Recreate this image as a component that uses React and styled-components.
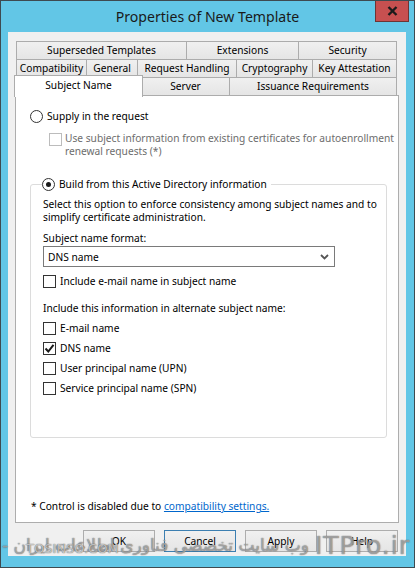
import React from "react";
import styled, { createGlobalStyle } from "styled-components";

const Global = createGlobalStyle`
  html, body { margin: 0; padding: 0; background: #5fc4e4; }
  * { box-sizing: border-box; }
  body { font-family: "Noto Sans", "Open Sans", sans-serif; }
`;

const FS = "10.2px";

const Window = styled.div`
  position: relative;
  width: 415px;
  height: 568px;
  background: #62c6e6;
  border: 1px solid #3e4a50;
  display: flex;
  flex-direction: column;
  overflow: hidden;
`;

const TitleBar = styled.div`
  height: 31px;
  display: grid;
  grid-template-columns: 1fr auto 1fr;
  align-items: start;
`;

const Title = styled.div`
  grid-column: 2;
  font-size: 14.1px;
  color: #1a1a1a;
  line-height: 31px;
`;

const CloseButton = styled.div`
  grid-column: 3;
  justify-self: end;
  margin-right: 5px;
  margin-top: -1px;
  width: 34px;
  height: 22px;
  background: #c75050;
  border: 1px solid #6e3434;
  border-top: none;
  display: flex;
  align-items: center;
  justify-content: center;
`;

const Client = styled.div`
  margin: 0 8px 0 7px;
  height: 524px;
  background: #f0f0f0;
  display: flex;
  flex-direction: column;
  padding: 9px 7px 0 7px;
`;

const TabStrip = styled.div`
  margin-left: 1px;
  width: 381px;
  display: flex;
  flex-direction: column;
`;

const TabRow = styled.div`
  display: flex;
  height: 18px;
  position: relative;
  z-index: ${(p) => p.$z || 0};
`;

const Tab = styled.div`
  flex: none;
  width: ${(p) => p.$w}px;
  height: 19px;
  border: 1px solid #acacac;
  background: linear-gradient(#f0f0f0, #e5e5e5);
  font-size: ${FS};
  color: #000;
  text-align: center;
  line-height: 16px;
  white-space: nowrap;
  & + & { margin-left: -1px; }
`;

const ActiveTab = styled(Tab)`
  position: relative;
  z-index: 3;
  width: ${(p) => p.$w + 2}px;
  height: 22px;
  margin-top: -2px;
  margin-left: -2px;
  margin-right: -1px;
  background: #ffffff;
  border-bottom: none;
  line-height: 18px;
`;

const Panel = styled.div`
  position: relative;
  z-index: 1;
  width: 384px;
  height: 428px;
  background: #ffffff;
  border: 1px solid #adadad;
  padding: 13px 0 0 14px;
  display: flex;
  flex-direction: column;
  font-size: ${FS};
  color: #000;
`;

const OptionRow = styled.label`
  display: flex;
  align-items: center;
  gap: 4px;
  height: 14px;
  line-height: 14px;
  margin-top: ${(p) => p.$mt || 0}px;
  color: #000;
  white-space: nowrap;
`;

const RadioCircle = styled.span`
  flex: none;
  width: 13px;
  height: 13px;
  border-radius: 50%;
  border: 1px solid #333;
  background: #fff;
  display: flex;
  align-items: center;
  justify-content: center;
  &::after {
    content: "";
    width: 5px;
    height: 5px;
    border-radius: 50%;
    background: ${(p) => (p.$checked ? "#1a1a1a" : "transparent")};
  }
`;

const CheckBox = styled.span`
  flex: none;
  width: 13px;
  height: 13px;
  border: 1px solid ${(p) => (p.$disabled ? "#bcbcbc" : "#333")};
  background: #fff;
  display: flex;
  align-items: center;
  justify-content: center;
`;

const DisabledOption = styled.div`
  display: flex;
  align-items: flex-start;
  gap: 3px;
  margin: 9px 0 0 19px;
  color: #6d6d6d;
  line-height: 13px;
  white-space: nowrap;
  & > span:first-child { margin-top: 1px; }
`;

const GroupBox = styled.fieldset`
  margin: 19px 0 0 0;
  width: 357px;
  height: 261px;
  border: 1px solid #dcdcdc;
  border-radius: 3px;
  padding: 0 0 0 12px;
  min-width: 0;
`;

const Legend = styled.legend`
  padding: 0 4px 0 0;
  margin-left: -1px;
`;

const Para = styled.div`
  line-height: 13px;
  margin-top: ${(p) => p.$mt || 0}px;
  white-space: nowrap;
`;

const Select = styled.div`
  margin-top: 1px;
  width: 292px;
  height: 21px;
  border: 1px solid #7a7a7a;
  background: #fff;
  display: flex;
  align-items: center;
  justify-content: space-between;
  padding: 0 5px 0 4px;
`;

const CheckList = styled.div`
  display: flex;
  flex-direction: column;
  gap: 6px;
  margin-top: 6px;
`;

const Footer = styled.div`
  margin-top: auto;
  margin-bottom: 9px;
  padding-left: 1px;
  white-space: nowrap;
`;

const Link = styled.a`
  color: #0066cc;
  text-decoration: underline;
`;

const ButtonBar = styled.div`
  display: flex;
  justify-content: flex-end;
  gap: 9px;
  margin-top: 7px;
  padding-right: 1px;
`;

const Button = styled.div`
  width: 72px;
  height: 22px;
  border: 1px solid ${(p) => (p.$default ? "#3c7fb1" : "#adadad")};
  background: linear-gradient(#f0f0f0, #e5e5e5);
  font-size: ${FS};
  display: flex;
  align-items: center;
  justify-content: center;
  color: #000;
`;

const Watermark = styled.div`
  position: absolute;
  left: 0;
  right: 0;
  top: 526px;
  height: 36px;
  pointer-events: none;
  display: flex;
  align-items: center;
  justify-content: flex-end;
  padding-right: 4px;
  gap: 6px;
  white-space: nowrap;
  color: rgba(255, 255, 255, 0.4);
  text-shadow: 0 0 1px rgba(80, 80, 80, 0.7), 0 0 1px rgba(80, 80, 80, 0.7);
`;

const WmBig = styled.span`
  font-family: "DejaVu Sans", sans-serif;
  font-size: 25px;
  letter-spacing: 1px;
`;

const WmFa = styled.span`
  font-family: "DejaVu Sans", sans-serif;
  font-size: 17px;
  direction: rtl;
`;

const WmSmall = styled.span`
  position: absolute;
  left: 25px;
  top: 14px;
  font-family: "DejaVu Sans", sans-serif;
  font-size: 13px;
  color: rgba(255, 255, 255, 0.6);
`;

const Check = () => (
  <svg width="11" height="11" viewBox="0 0 11 11">
    <path d="M1.5 5.5 L4.3 8.5 L9.5 1.8" fill="none" stroke="#1a1a1a" strokeWidth="2" />
  </svg>
);

const rows = [
  [
    { t: "Superseded Templates", w: 171 },
    { t: "Extensions", w: 113 },
    { t: "Security", w: 99 },
  ],
  [
    { t: "Compatibility", w: 71 },
    { t: "General", w: 52 },
    { t: "Request Handling", w: 100 },
    { t: "Cryptography", w: 77 },
    { t: "Key Attestation", w: 85 },
  ],
];

export default function App() {
  return (
    <>
      <Global />
      <Window>
        <TitleBar>
          <Title>Properties of New Template</Title>
          <CloseButton>
            <svg width="11" height="10" viewBox="0 0 11 10">
              <path d="M1.5 1 L9.5 9 M9.5 1 L1.5 9" stroke="#1b1b1b" strokeWidth="2.4" />
            </svg>
          </CloseButton>
        </TitleBar>
        <Client>
          <TabStrip>
            {rows.map((r, i) => (
              <TabRow key={i}>
                {r.map((tab) => (
                  <Tab key={tab.t} $w={tab.w}>{tab.t}</Tab>
                ))}
              </TabRow>
            ))}
            <TabRow $z={2}>
              <ActiveTab $w={127}>Subject Name</ActiveTab>
              <Tab $w={89}>Server</Tab>
              <Tab $w={168}>Issuance Requirements</Tab>
            </TabRow>
          </TabStrip>
          <Panel>
            <OptionRow>
              <RadioCircle />
              Supply in the request
            </OptionRow>
            <DisabledOption>
              <CheckBox $disabled />
              <div>
                Use subject information from existing certificates for autoenrollment
                <br />
                renewal requests (*)
              </div>
            </DisabledOption>
            <GroupBox>
              <Legend>
                <OptionRow>
                  <RadioCircle $checked />
                  Build from this Active Directory information
                </OptionRow>
              </Legend>
              <Para $mt={7}>
                Select this option to enforce consistency among subject names and to
                <br />
                simplify certificate administration.
              </Para>
              <Para $mt={8}>Subject name format:</Para>
              <Select>
                <span>DNS name</span>
                <svg width="9" height="6" viewBox="0 0 9 6">
                  <path d="M1 1 L4.5 4.5 L8 1" fill="none" stroke="#555" strokeWidth="1.8" />
                </svg>
              </Select>
              <OptionRow $mt={7}>
                <CheckBox />
                Include e-mail name in subject name
              </OptionRow>
              <Para $mt={14}>Include this information in alternate subject name:</Para>
              <CheckList>
                <OptionRow>
                  <CheckBox />
                  E-mail name
                </OptionRow>
                <OptionRow>
                  <CheckBox>
                    <Check />
                  </CheckBox>
                  DNS name
                </OptionRow>
                <OptionRow>
                  <CheckBox />
                  User principal name (UPN)
                </OptionRow>
                <OptionRow>
                  <CheckBox />
                  Service principal name (SPN)
                </OptionRow>
              </CheckList>
            </GroupBox>
            <Footer>
              * Control is disabled due to <Link>compatibility settings.</Link>
            </Footer>
          </Panel>
          <ButtonBar>
            <Button>OK</Button>
            <Button $default>Cancel</Button>
            <Button>Apply</Button>
            <Button>Help</Button>
          </ButtonBar>
        </Client>
        <Watermark>
          <WmFa>وب سایت تخصصی فناوری اطلاعات ایران -</WmFa>
          <WmBig>ITPro.ir</WmBig>
          <WmSmall>TOSINSO.COM</WmSmall>
        </Watermark>
      </Window>
    </>
  );
}
